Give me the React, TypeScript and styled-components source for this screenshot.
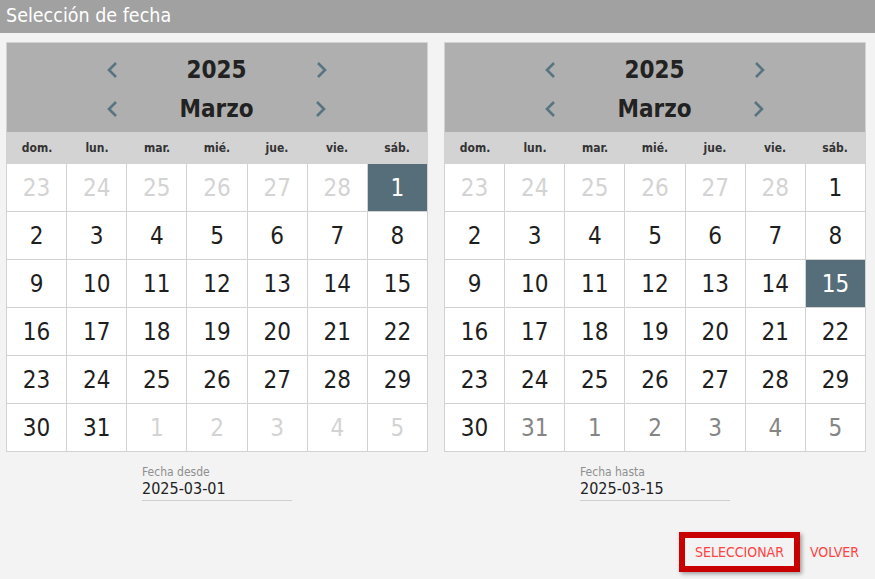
import React from "react";
import styled, { createGlobalStyle } from "styled-components";

const Global = createGlobalStyle`
  html, body { margin: 0; padding: 0; background: #f3f3f3; }
  body { font-family: "DejaVu Sans Condensed", "DejaVu Sans", Verdana, sans-serif; }
  * { box-sizing: border-box; }
`;

const Page = styled.div`
  width: 875px;
  height: 579px;
  background: #f3f3f3;
  display: flex;
  flex-direction: column;
  overflow: hidden;
`;

const TitleBar = styled.div`
  height: 33px;
  background: #a1a1a1;
  color: #fff;
  font-size: 19.5px;
  line-height: 32px;
  padding-left: 6px;
`;

const Columns = styled.div`
  display: grid;
  grid-template-columns: 1fr 1fr;
  gap: 16px;
  padding: 9px 9px 0 6px;
`;

const Column = styled.div`
  display: flex;
  flex-direction: column;
  align-items: center;
`;

const Calendar = styled.div`
  width: 100%;
  border: 1px solid #d2d2d2;
  background: #d2d2d2;
`;

const Header = styled.div`
  height: 89px;
  background: #afafaf;
  display: flex;
  flex-direction: column;
  padding-top: 7px;
`;

const NavRow = styled.div`
  height: 39px;
  display: flex;
  justify-content: center;
`;

const NavInner = styled.div`
  display: flex;
  align-items: center;
  justify-content: space-between;
  width: 224px;
  margin-left: -1px;
`;

const NavLabel = styled.div`
  font-weight: bold;
  font-size: 24px;
  color: #222;
`;

const Chevron = styled.svg`
  width: 14px;
  height: 18px;
  display: block;
`;

const WeekRow = styled.div`
  height: 32px;
  background: #d3d3d3;
  display: grid;
  grid-template-columns: repeat(7, 1fr);
  align-items: center;
  text-align: center;
  font-weight: bold;
  font-size: 12px;
  color: #333;
`;

const Grid = styled.div`
  display: grid;
  grid-template-columns: repeat(7, 1fr);
  grid-auto-rows: 47px;
  gap: 1px;
`;

type Kind = "normal" | "muted" | "disabled" | "selected";

const Cell = styled.div<{ $kind: Kind }>`
  display: flex;
  align-items: center;
  justify-content: center;
  padding-top: 1px;
  font-size: 24px;
  background: ${(p) => (p.$kind === "selected" ? "#566e79" : "#fff")};
  color: ${(p) =>
    p.$kind === "selected"
      ? "#fff"
      : p.$kind === "muted"
      ? "#d3d3d3"
      : p.$kind === "disabled"
      ? "#858585"
      : "#1e1e1e"};
`;

const Field = styled.div`
  width: 150px;
  margin-top: 13px;
  border-bottom: 1px solid #cfcfcf;
  padding-bottom: 1px;
`;

const FieldLabel = styled.div`
  font-size: 12px;
  color: #8f8f8f;
  line-height: 14px;
`;

const FieldValue = styled.div`
  font-size: 16px;
  color: #222;
  line-height: 20px;
`;

const Footer = styled.div`
  display: flex;
  justify-content: flex-end;
  gap: 6px;
  padding: 37px 6px 0 0;
`;

const Button = styled.button<{ $highlight?: boolean }>`
  height: 28px;
  padding: 0 10px;
  border: none;
  background: transparent;
  color: #ff4242;
  font-family: inherit;
  font-size: 14px;
  cursor: pointer;
  outline: ${(p) => (p.$highlight ? "6px solid #c80000" : "none")};
  box-shadow: ${(p) => (p.$highlight ? "2px 2px 4px 6px rgba(0,0,0,0.35)" : "none")};
`;

const ChevronIcon = ({ dir }: { dir: "left" | "right" }) => (
  <Chevron viewBox="0 0 14 18">
    <path
      d={dir === "left" ? "M11 2 L4 9 L11 16" : "M3 2 L10 9 L3 16"}
      fill="none"
      stroke="#587480"
      strokeWidth="2.6"
    />
  </Chevron>
);

const weekdays = ["dom.", "lun.", "mar.", "mié.", "jue.", "vie.", "sáb."];

type Day = { n: number; kind: Kind };

function buildDays(selected: number, maxDay: number | null): Day[] {
  const days: Day[] = [];
  for (let d = 23; d <= 28; d++) days.push({ n: d, kind: "muted" });
  for (let d = 1; d <= 31; d++) {
    let kind: Kind = "normal";
    if (d === selected) kind = "selected";
    else if (maxDay !== null && d > maxDay) kind = "disabled";
    days.push({ n: d, kind });
  }
  for (let d = 1; d <= 5; d++)
    days.push({ n: d, kind: maxDay !== null ? "disabled" : "muted" });
  return days;
}

const CalendarView = ({
  days,
  label,
  value,
}: {
  days: Day[];
  label: string;
  value: string;
}) => (
  <Column>
    <Calendar>
      <Header>
        <NavRow>
          <NavInner>
            <ChevronIcon dir="left" />
            <NavLabel>2025</NavLabel>
            <ChevronIcon dir="right" />
          </NavInner>
        </NavRow>
        <NavRow>
          <NavInner>
            <ChevronIcon dir="left" />
            <NavLabel>Marzo</NavLabel>
            <ChevronIcon dir="right" />
          </NavInner>
        </NavRow>
      </Header>
      <WeekRow>
        {weekdays.map((w) => (
          <div key={w}>{w}</div>
        ))}
      </WeekRow>
      <Grid>
        {days.map((d, i) => (
          <Cell key={i} $kind={d.kind}>
            {d.n}
          </Cell>
        ))}
      </Grid>
    </Calendar>
    <Field>
      <FieldLabel>{label}</FieldLabel>
      <FieldValue>{value}</FieldValue>
    </Field>
  </Column>
);

export default function App() {
  return (
    <Page>
      <Global />
      <TitleBar>Selección de fecha</TitleBar>
      <Columns>
        <CalendarView days={buildDays(1, null)} label="Fecha desde" value="2025-03-01" />
        <CalendarView days={buildDays(15, 30)} label="Fecha hasta" value="2025-03-15" />
      </Columns>
      <Footer>
        <Button $highlight>SELECCIONAR</Button>
        <Button>VOLVER</Button>
      </Footer>
    </Page>
  );
}
